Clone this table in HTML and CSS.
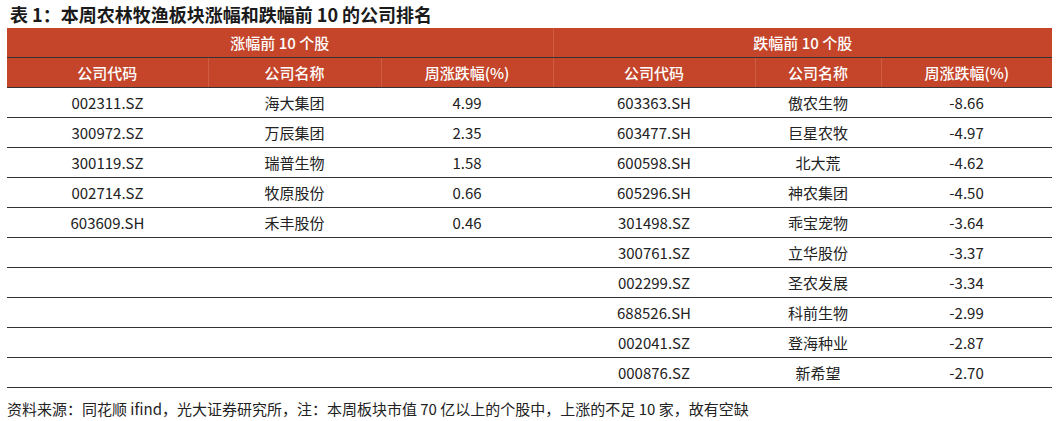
FILE: index.html
```html
<!DOCTYPE html>
<html lang="zh-CN">
<head>
<meta charset="utf-8">
<link rel="stylesheet" href="styles.css">
</head>
<body>
<div class="page">
  <h1 class="title">表 1：本周农林牧渔板块涨幅和跌幅前 10 的公司排名</h1>
  <table class="rank">
    <colgroup>
      <col class="c1"><col class="c2"><col class="c3"><col class="c4"><col class="c5"><col class="c6">
    </colgroup>
    <thead>
      <tr class="h1">
        <th colspan="3">涨幅前 10 个股</th>
        <th colspan="3">跌幅前 10 个股</th>
      </tr>
      <tr class="h2">
        <th>公司代码</th><th>公司名称</th><th>周涨跌幅(%)</th>
        <th>公司代码</th><th>公司名称</th><th>周涨跌幅(%)</th>
      </tr>
    </thead>
    <tbody>
      <tr><td>002311.SZ</td><td>海大集团</td><td>4.99</td><td>603363.SH</td><td>傲农生物</td><td>-8.66</td></tr>
      <tr><td>300972.SZ</td><td>万辰集团</td><td>2.35</td><td>603477.SH</td><td>巨星农牧</td><td>-4.97</td></tr>
      <tr><td>300119.SZ</td><td>瑞普生物</td><td>1.58</td><td>600598.SH</td><td>北大荒</td><td>-4.62</td></tr>
      <tr><td>002714.SZ</td><td>牧原股份</td><td>0.66</td><td>605296.SH</td><td>神农集团</td><td>-4.50</td></tr>
      <tr><td>603609.SH</td><td>禾丰股份</td><td>0.46</td><td>301498.SZ</td><td>乖宝宠物</td><td>-3.64</td></tr>
      <tr><td></td><td></td><td></td><td>300761.SZ</td><td>立华股份</td><td>-3.37</td></tr>
      <tr><td></td><td></td><td></td><td>002299.SZ</td><td>圣农发展</td><td>-3.34</td></tr>
      <tr><td></td><td></td><td></td><td>688526.SH</td><td>科前生物</td><td>-2.99</td></tr>
      <tr><td></td><td></td><td></td><td>002041.SZ</td><td>登海种业</td><td>-2.87</td></tr>
      <tr><td></td><td></td><td></td><td>000876.SZ</td><td>新希望</td><td>-2.70</td></tr>
    </tbody>
  </table>
  <p class="note">资料来源：同花顺 ifind，光大证券研究所，注：本周板块市值 70 亿以上的个股中，上涨的不足 10 家，故有空缺</p>
</div>
</body>
</html>
```

FILE: styles.css
```css
html, body {
  margin: 0;
  padding: 0;
  background: #ffffff;
}

.page {
  padding: 0 6px 0 7px;
  font-family: "Noto Sans CJK SC", "Noto Sans", sans-serif;
  color: #222222;
}

.title {
  margin: 0;
  padding-left: 3px;
  height: 28px;
  line-height: 28px;
  font-size: 18px;
  font-weight: 700;
  color: #1a1a1a;
}

.rank {
  width: 1045px;
  border-collapse: collapse;
  table-layout: fixed;
  font-size: 15px;
}

.c1 { width: 201px; }
.c2 { width: 173px; }
.c3 { width: 172px; }
.c4 { width: 202px; }
.c5 { width: 126px; }
.c6 { width: 171px; }

.rank th,
.rank td {
  height: 29px;
  padding: 0;
  text-align: center;
  vertical-align: middle;
  line-height: 29px;
  border-bottom: 1px solid #333333;
  white-space: nowrap;
}

.rank thead th {
  background: #c4452a;
  color: #ffffff;
  font-weight: 500;
  border-left: 1px solid #cf5d43;
}

.rank thead th:first-child {
  border-left: none;
}

.rank tbody td {
  color: #222222;
}

.note {
  margin: 0;
  padding-top: 11px;
  font-size: 15px;
  line-height: 20px;
  color: #222222;
}
```
